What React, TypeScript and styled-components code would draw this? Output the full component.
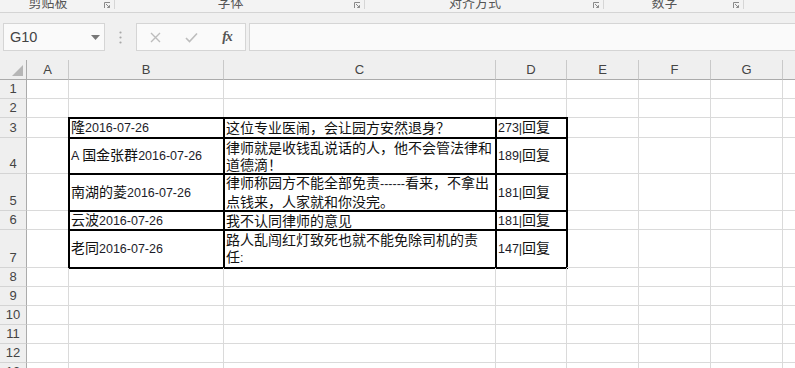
import React from 'react'
import styled, {createGlobalStyle, css} from 'styled-components'

// column widths include the 1px gridline on the right
const COLUMNS = [
  {name: 'A', width: 42},
  {name: 'B', width: 155},
  {name: 'C', width: 272},
  {name: 'D', width: 71},
  {name: 'E', width: 72},
  {name: 'F', width: 72},
  {name: 'G', width: 72},
  {name: 'H', width: 72},
]

const ROW_HEIGHTS = [19, 19, 20, 36, 37, 19, 38, 19, 19, 19, 19, 19, 19]

// table contents, B:C:D by row number
const TABLE: Record<number, [string, string, string]> = {
  3: ['隆2016-07-26', '这位专业医闹，会让园方安然退身？', '273|回复'],
  4: ['A 国金张群2016-07-26', '律师就是收钱乱说话的人，他不会管法律和道德滴！', '189|回复'],
  5: ['南湖的菱2016-07-26', '律师称园方不能全部免责------看来，不拿出点钱来，人家就和你没完。', '181|回复'],
  6: ['云波2016-07-26', '我不认同律师的意见', '181|回复'],
  7: ['老同2016-07-26', '路人乱闯红灯致死也就不能免除司机的责任:', '147|回复'],
}

const RIBBON_GROUPS = [
  {label: '剪贴板', width: 115},
  {label: '字体', width: 250},
  {label: '对齐方式', width: 239},
  {label: '数字', width: 140},
]

const GlobalStyle = createGlobalStyle`
  html, body {
    margin: 0;
    padding: 0;
  }
  body {
    width: 795px;
    height: 368px;
    overflow: hidden;
    background: #f0f0f0;
    font-family: "Liberation Sans", "Noto Sans CJK SC", sans-serif;
  }
`

const Window = styled.div`
  width: 795px;
  height: 368px;
  overflow: hidden;
  display: flex;
  flex-direction: column;
`

const Ribbon = styled.div`
  display: flex;
  height: 13px;
  flex: none;
  box-sizing: border-box;
  border-bottom: 1px solid #d4d4d4;
  background: #f3f3f3;
  overflow: hidden;
`

const RibbonGroup = styled.div<{$width: number}>`
  width: ${p => p.$width}px;
  height: 9px;
  flex: none;
  box-sizing: border-box;
  display: flex;
  border-right: 1px solid #d6d6d6;
`

const RibbonLabel = styled.div`
  flex: 1;
  padding-right: 8px;
  margin-top: -5px;
  text-align: center;
  font-family: "Noto Sans CJK SC", sans-serif;
  font-size: 13px;
  line-height: 13px;
  color: #555;
`

const Launcher = styled.svg`
  flex: none;
  width: 7px;
  height: 7px;
  margin: 2px 3px 0 0;
`

const FormulaBar = styled.div`
  display: flex;
  height: 28px;
  flex: none;
  margin: 10px 0 9px;
`

const Field = styled.div`
  box-sizing: border-box;
  border: 1px solid #d5d5d5;
  background: #fafafa;
  display: flex;
  align-items: center;
`

const NameBox = styled(Field)`
  width: 102px;
  margin-left: 3px;
  padding: 0 4px 0 6px;
  justify-content: space-between;
  font-size: 14.5px;
  color: #444;
`

const Grip = styled.div`
  width: 31px;
  display: flex;
  align-items: center;
  justify-content: center;
`

const ButtonsBox = styled(Field)`
  width: 110px;
  margin-right: 3px;
`

const Slot = styled.div`
  flex: 1;
  display: flex;
  align-items: center;
  justify-content: center;
`

const Fx = styled.span`
  font-family: "Liberation Serif", serif;
  font-style: italic;
  font-weight: bold;
  font-size: 14px;
  color: #555;
  letter-spacing: -1px;
`

const FormulaInput = styled(Field)`
  flex: 1;
  margin-right: -2px;
`

const Sheet = styled.div<{$cols: string; $rows: string}>`
  flex: 1;
  display: grid;
  grid-template-columns: ${p => p.$cols};
  grid-template-rows: ${p => p.$rows};
  background: #fff;
  overflow: hidden;
`

const headerBase = css`
  box-sizing: border-box;
  background: #efefef;
  color: #444;
  font-size: 13px;
  display: flex;
  justify-content: center;
`

const Corner = styled.div`
  ${headerBase};
  border-right: 1px solid #ababab;
  border-bottom: 1px solid #ababab;
  align-items: flex-end;
  justify-content: flex-end;
  padding: 0 3px 3px 0;
`

const ColHeader = styled.div`
  ${headerBase};
  align-items: center;
  border-right: 1px solid #c9c9c9;
  border-bottom: 1px solid #ababab;
`

const RowHeader = styled.div`
  ${headerBase};
  align-items: flex-end;
  padding-bottom: 2px;
  border-right: 1px solid #ababab;
  border-bottom: 1px solid #d4d4d4;
  line-height: 15px;
`

const Cell = styled.div<{$boxed?: boolean; $wrap?: boolean}>`
  box-sizing: border-box;
  border-right: 1px solid #dadada;
  border-bottom: 1px solid #dadada;
  display: flex;
  align-items: center;
  padding: 0 1px 0 2px;
  min-width: 0;
  overflow: ${p => (p.$boxed ? 'visible' : 'hidden')};
  color: #111;
  font-family: "Noto Sans CJK SC", sans-serif;
  font-size: 14px;
  line-height: 17px;
  white-space: ${p => (p.$wrap ? 'normal' : 'nowrap')};
  ${p => p.$boxed && css`
    outline: 2px solid #000;
    outline-offset: -1px;
  `}
`

const Latin = styled.span`
  font-family: "Liberation Sans", sans-serif;
  font-size: 12.5px;
  color: #1c1c2a;
`

function renderText(text: string) {
  // ASCII runs are set in the narrower latin face, as in the sheet
  const parts = text.match(/[\x20-\x7e]+|[^\x20-\x7e]+/g) || []
  return parts.map((part, i) =>
    /^[\x20-\x7e]+$/.test(part) ? <Latin key={i}>{part}</Latin> : <React.Fragment key={i}>{part}</React.Fragment>
  )
}

const LauncherIcon = () => (
  <Launcher viewBox="0 0 7 7">
    <path d="M0.5 6 V0.5 H6" fill="none" stroke="#8a8a8a" strokeWidth="1" />
    <path d="M2 2 L5.5 5.5 M3.2 5.5 H5.5 V3.2" fill="none" stroke="#8a8a8a" strokeWidth="1" />
  </Launcher>
)

const App: React.FC = () => {
  const cols = ['27px', ...COLUMNS.map(c => `${c.width}px`)].join(' ')
  const rows = ['20px', ...ROW_HEIGHTS.map(h => `${h}px`)].join(' ')

  return (
    <>
      <GlobalStyle />
      <Window>
        <Ribbon>
          {RIBBON_GROUPS.map(g => (
            <RibbonGroup key={g.label} $width={g.width}>
              <RibbonLabel>{g.label}</RibbonLabel>
              <LauncherIcon />
            </RibbonGroup>
          ))}
        </Ribbon>

        <FormulaBar>
          <NameBox>
            <span>G10</span>
            <svg width="9" height="5" viewBox="0 0 9 5">
              <path d="M0 0 H9 L4.5 5 Z" fill="#777" />
            </svg>
          </NameBox>
          <Grip>
            <svg width="3" height="13" viewBox="0 0 3 13">
              <circle cx="1.5" cy="1.5" r="1.1" fill="#a8a8a8" />
              <circle cx="1.5" cy="6.5" r="1.1" fill="#a8a8a8" />
              <circle cx="1.5" cy="11.5" r="1.1" fill="#a8a8a8" />
            </svg>
          </Grip>
          <ButtonsBox>
            <Slot>
              <svg width="11" height="11" viewBox="0 0 11 11">
                <path d="M1 1 L10 10 M10 1 L1 10" stroke="#bdbdbd" strokeWidth="1.4" />
              </svg>
            </Slot>
            <Slot>
              <svg width="13" height="11" viewBox="0 0 13 11">
                <path d="M1 6 L4.5 9.5 L12 1.5" fill="none" stroke="#bdbdbd" strokeWidth="1.6" />
              </svg>
            </Slot>
            <Slot>
              <Fx>fx</Fx>
            </Slot>
          </ButtonsBox>
          <FormulaInput />
        </FormulaBar>

        <Sheet $cols={cols} $rows={rows}>
          <Corner>
            <svg width="11" height="11" viewBox="0 0 11 11">
              <path d="M11 0 V11 H0 Z" fill="#b6b6b6" />
            </svg>
          </Corner>
          {COLUMNS.map(c => (
            <ColHeader key={c.name}>{c.name}</ColHeader>
          ))}
          {ROW_HEIGHTS.map((_, r) => {
            const rowNo = r + 1
            const data = TABLE[rowNo]
            return (
              <React.Fragment key={rowNo}>
                <RowHeader>{rowNo}</RowHeader>
                {COLUMNS.map((c, ci) => {
                  const idx = ci - 1 // B is 0
                  const inTable = !!data && idx >= 0 && idx <= 2
                  return (
                    <Cell key={c.name} $boxed={inTable} $wrap={inTable && idx === 1}>
                      {inTable ? <div>{renderText(data[idx])}</div> : null}
                    </Cell>
                  )
                })}
              </React.Fragment>
            )
          })}
        </Sheet>
      </Window>
    </>
  )
}

export default App
